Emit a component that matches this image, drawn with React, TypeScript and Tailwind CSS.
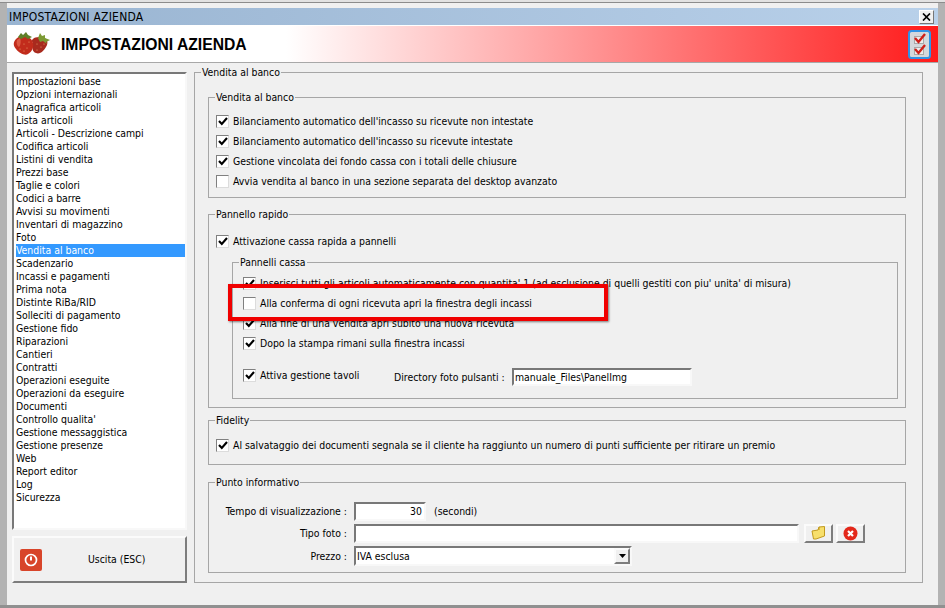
import React from "react";

const font = "font-['DejaVu_Sans_Condensed','DejaVu_Sans',sans-serif]";

const items = ["Impostazioni base","Opzioni internazionali","Anagrafica articoli","Lista articoli","Articoli - Descrizione campi","Codifica articoli","Listini di vendita","Prezzi base","Taglie e colori","Codici a barre","Avvisi su movimenti","Inventari di magazzino","Foto","Vendita al banco","Scadenzario","Incassi e pagamenti","Prima nota","Distinte RiBa/RID","Solleciti di pagamento","Gestione fido","Riparazioni","Cantieri","Contratti","Operazioni eseguite","Operazioni da eseguire","Documenti","Controllo qualita'","Gestione messaggistica","Gestione presenze","Web","Report editor","Log","Sicurezza"];

function Check({ checked = true, label, className = "" }: { checked?: boolean; label: string; className?: string }) {
  return (
    <div className={`flex items-center h-[14px] ${className}`}>
      <span className="w-[13px] h-[13px] shrink-0 bg-white border border-[#808080] border-r-[#dcdcdc] border-b-[#dcdcdc] flex items-center justify-center">
        {checked && (
          <svg width="10" height="9" viewBox="0 0 10 9"><path d="M1 4 L3.8 7 L9 1" fill="none" stroke="#000" strokeWidth="2.1" /></svg>
        )}
      </span>
      <span className="ml-[4px] whitespace-nowrap">{label}</span>
    </div>
  );
}

function Group({ title, className = "", children }: { title: string; className?: string; children: React.ReactNode }) {
  return (
    <fieldset className={`border border-[#a6a6a6] ${className}`}>
      <legend className="ml-[6px] px-[1px] h-[14px] leading-[14px]">{title}</legend>
      {children}
    </fieldset>
  );
}

function Sunken({ className = "", children }: { className?: string; children?: React.ReactNode }) {
  return (
    <div className={`bg-white border-2 border-t-[#787878] border-l-[#787878] border-r-[#f8f8f8] border-b-[#f8f8f8] ${className}`}>{children}</div>
  );
}

function Raised({ className = "", children }: { className?: string; children?: React.ReactNode }) {
  return (
    <div className={`bg-[#f0f0f0] border-2 border-t-[#fbfbfb] border-l-[#fbfbfb] border-r-[#7d7d7d] border-b-[#7d7d7d] ${className}`}>{children}</div>
  );
}

function Strawberry() {
  return (
    <svg width="38" height="24" viewBox="0 0 38 24">
      <path d="M20 11 C17 8 21 5 26 5 C31 4 36 8 34 13 C32 18 27 23 23 21 C19 20 19 15 20 11Z" fill="#a82a1e" />
      <path d="M3 7 C0 10 0 14 3 17 C6 21 12 24 15 22 C19 20 21 15 20 11 C19 6 14 4 9 4 C7 4 5 5 3 7Z" fill="#c22c1c" />
      <path d="M4 8 C3 11 4 14 6 15 C8 13 8 8 7 6Z" fill="#dc5a44" />
      <path d="M5 5 L8 1 L10 3 L13 0 L15 3 L19 5 L15 7 L12 5 L8 7Z" fill="#5f7f28" />
      <path d="M25 6 L27 1 L29 4 L32 3 L32 6 L37 8 L33 10 L34 12 L30 9 L27 10Z" fill="#7c9a34" />
      <g fill="#e9a06a">
        <circle cx="7" cy="17" r="0.6" /><circle cx="11" cy="12" r="0.6" /><circle cx="14" cy="16" r="0.6" /><circle cx="11" cy="19" r="0.6" /><circle cx="16" cy="10" r="0.6" />
        <circle cx="24" cy="12" r="0.6" /><circle cx="28" cy="15" r="0.6" /><circle cx="24" cy="18" r="0.6" /><circle cx="31" cy="12" r="0.6" />
      </g>
    </svg>
  );
}

function ChecklistIcon() {
  return (
    <svg width="23" height="29" viewBox="0 0 23 29">
      <rect x="1" y="1" width="21" height="27" rx="2.5" fill="#d4d8dc" stroke="#2f93e6" strokeWidth="2" />
      <rect x="6.5" y="6.5" width="9" height="7" fill="#ececec" stroke="#a8a8a8" />
      <rect x="6.5" y="17.5" width="9" height="7" fill="#ececec" stroke="#a8a8a8" />
      <path d="M7 8 L10.5 12 L17 4" fill="none" stroke="#cf1f18" strokeWidth="2.4" />
      <path d="M7 19 L10.5 23 L17 15" fill="none" stroke="#cf1f18" strokeWidth="2.4" />
    </svg>
  );
}

export default function App() {
  return (
    <div className={`w-[945px] h-[608px] overflow-hidden relative flex flex-col bg-[#b3b3b3] text-[10.4px] leading-[13px] text-black ${font}`}>
      <div className="h-[2px] bg-[#e2e2e2]"></div>
      <div className="h-[1px] bg-[#8c8c8c]"></div>
      <div className="flex-1 px-[7px] min-h-0">
        <div className="h-full bg-[#f0f0f0] pt-[5px] flex flex-col">
          <div className="h-[17px] flex items-center justify-between pl-[2px] pr-[4px] bg-gradient-to-r from-[#99b4d1] to-[#b9d1ea]">
            <span className="text-[12px] tracking-[0.25px] pt-[1px]">IMPOSTAZIONI AZIENDA</span>
            <span className="w-[15px] h-[14px] bg-[#f0f0f0] border border-[#fff] border-r-[#777] border-b-[#777] flex items-center justify-center">
              <svg width="9" height="8" viewBox="0 0 9 8"><path d="M1 0.5 L8 7.5 M8 0.5 L1 7.5" stroke="#000" strokeWidth="1.7" /></svg>
            </span>
          </div>
          <div className="h-[1px] bg-white"></div>
          <div className="h-[37px] flex items-center bg-[linear-gradient(90deg,#fff_0%,#fff_30%,#ff1a1a_100%)] border-b border-[#a8a8a8] pl-[6px] pr-[7px]">
            <Strawberry />
            <span className="ml-[10px] text-[15.7px] font-bold text-black font-['Liberation_Sans',sans-serif]">IMPOSTAZIONI AZIENDA</span>
            <span className="ml-auto"><ChecklistIcon /></span>
          </div>
          <div className="flex-1 flex pl-[5px] pr-[15px] pt-[2px]">
            <div className="w-[175px] flex flex-col mt-[7px]">
              <Sunken className="h-[458px] pl-[2px] pt-[1px]">
                {items.map((t) =>
                  <div key={t} className={`h-[13px] leading-[13px] whitespace-nowrap ${t === "Vendita al banco" ? "bg-[#3399ff] text-white" : ""}`}>{t}</div>
                )}
              </Sunken>
              <Raised className="mt-[6px] h-[47px] flex items-center pl-[6px]">
                <span className="w-[22px] h-[22px] rounded-[2px] bg-[#d8452a] flex items-center justify-center">
                  <svg width="14" height="14" viewBox="0 0 14 14"><circle cx="7" cy="7" r="5.5" fill="none" stroke="#fff" strokeWidth="1.7" /><path d="M7 3.5 V7.5" stroke="#fff" strokeWidth="2" /></svg>
                </span>
                <span className="ml-[46px]">Uscita (ESC)</span>
              </Raised>
            </div>

            <Group title="Vendita al banco" className="ml-[7px] w-[729px] h-[518px]">
              <div className="pl-[13px] pr-[16px]">
                <Group title="Vendita al banco" className="mt-[11px] h-[108px]">
                  <div className="pl-[7px] pt-[10px] flex flex-col gap-[6px]">
                    <Check label="Bilanciamento automatico dell'incasso su ricevute non intestate" />
                    <Check label="Bilanciamento automatico dell'incasso su ricevute intestate" />
                    <Check label="Gestione vincolata dei fondo cassa con i totali delle chiusure" />
                    <Check checked={false} label="Avvia vendita al banco in una sezione separata del desktop avanzato" />
                  </div>
                </Group>

                <Group title="Pannello rapido" className="mt-[9px] h-[201px]">
                  <div className="pl-[7px] pr-[7px]">
                    <Check className="mt-[13px]" label="Attivazione cassa rapida a pannelli" />
                    <Group title="Pannelli cassa" className="mt-[7px] ml-[16px] h-[144px]">
                      <div className="pl-[10px]">
                        <div className="pt-[7px] flex flex-col gap-[6px]">
                          <Check label="Inserisci tutti gli articoli automaticamente con quantita' 1 (ad esclusione di quelli gestiti con piu' unita' di misura)" />
                          <Check checked={false} label="Alla conferma di ogni ricevuta apri la finestra degli incassi" />
                          <Check label="Alla fine di una vendita apri subito una nuova ricevuta" />
                          <Check label="Dopo la stampa rimani sulla finestra incassi" />
                        </div>
                        <div className="flex items-center mt-[15px]">
                          <div className="w-[151px]"><Check label="Attiva gestione tavoli" /></div>
                          <span className="whitespace-nowrap w-[118px] pt-[4px]">Directory foto pulsanti :</span>
                          <Sunken className="w-[180px] h-[18px] pl-[1px] leading-[14px] mt-[3px]">manuale_Files\PanelImg</Sunken>
                        </div>
                      </div>
                    </Group>
                  </div>
                </Group>

                <Group title="Fidelity" className="mt-[5px] h-[52px]">
                  <div className="pl-[7px]">
                    <Check className="mt-[11px]" label="Al salvataggio dei documenti segnala se il cliente ha raggiunto un numero di punti sufficiente per ritirare un premio" />
                  </div>
                </Group>

                <Group title="Punto informativo" className="mt-[10px] h-[98px]">
                  <div className="pt-[12px] flex flex-col">
                    <div className="flex items-center h-[20px]">
                      <span className="w-[145px] text-right pr-[7px] whitespace-nowrap">Tempo di visualizzazione :</span>
                      <Sunken className="w-[72px] h-[19px] text-right pr-[2px] leading-[15px]">30</Sunken>
                      <span className="ml-[8px]">(secondi)</span>
                    </div>
                    <div className="flex items-center h-[20px] mt-[2px]">
                      <span className="w-[145px] text-right pr-[7px]">Tipo foto :</span>
                      <Sunken className="w-[445px] h-[19px]" />
                      <Raised className="ml-[5px] w-[29px] h-[19px] flex items-center justify-center">
                        <svg width="15" height="14" viewBox="0 0 15 14"><path d="M1 5 L7 4 L8 1 L13.5 0.5 V10 L5 13 H2.5Z" fill="#f7df6b" stroke="#c29a1e" /><path d="M8 1 V4" stroke="#c29a1e" /></svg>
                      </Raised>
                      <Raised className="ml-[3px] w-[29px] h-[19px] flex items-center justify-center">
                        <svg width="15" height="15" viewBox="0 0 15 15"><circle cx="7.5" cy="7.5" r="7" fill="#e3281a" /><path d="M5 5 L10 10 M10 5 L5 10" stroke="#fff" strokeWidth="2.2" /></svg>
                      </Raised>
                    </div>
                    <div className="flex items-center h-[20px] mt-[3px]">
                      <span className="w-[145px] text-right pr-[7px]">Prezzo :</span>
                      <Sunken className="w-[278px] h-[20px] flex items-center justify-between pl-[1px]">
                        <span>IVA esclusa</span>
                        <Raised className="w-[16px] h-[16px] flex items-center justify-center">
                          <svg width="7" height="4" viewBox="0 0 7 4"><path d="M0 0 H7 L3.5 4Z" fill="#000" /></svg>
                        </Raised>
                      </Sunken>
                    </div>
                  </div>
                </Group>
              </div>
            </Group>
          </div>
        </div>
      </div>
      <div className="h-[3px] bg-[#909090]"></div>
      <div className="absolute left-[228px] top-[284px] w-[380px] h-[37px] border-[4px] border-[#f00000] shadow-[1px_1px_2px_rgba(0,0,0,0.5)]"></div>
    </div>
  );
}
